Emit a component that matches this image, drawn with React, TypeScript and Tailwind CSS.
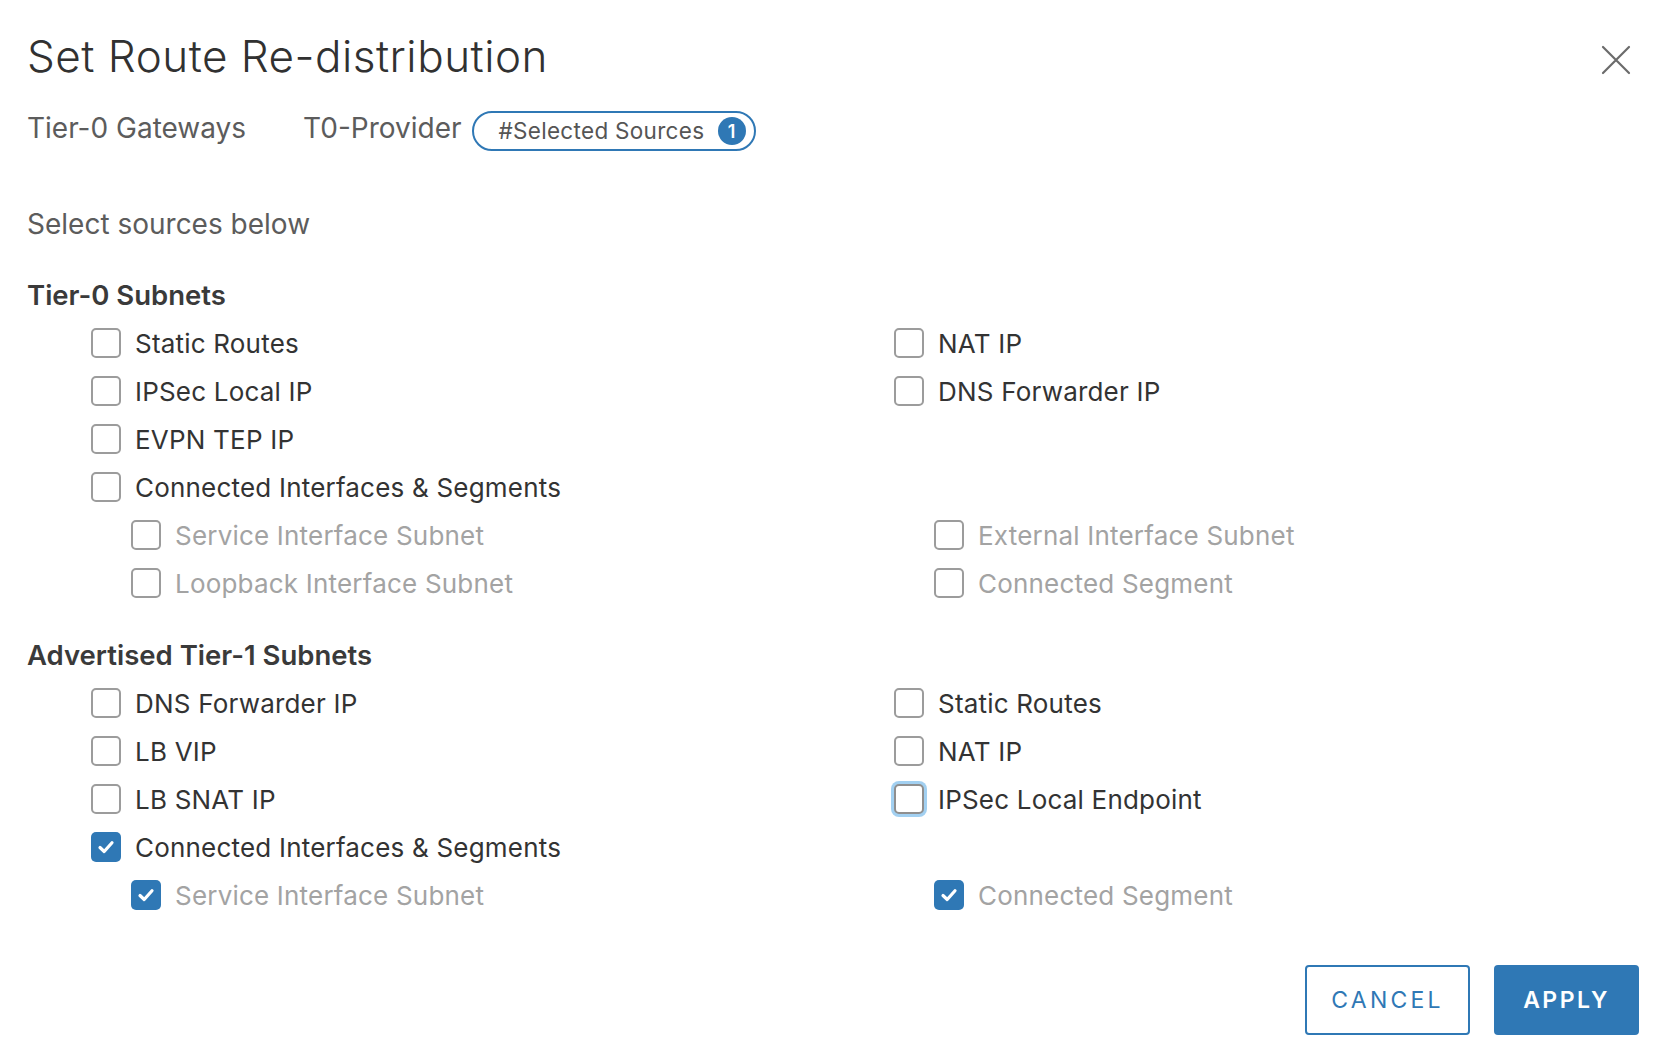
import React from "react";

function Box({ checked = false, focus = false }: { checked?: boolean; focus?: boolean }) {
  if (checked) {
    return (
      <span className="flex h-[30px] w-[30px] shrink-0 items-center justify-center rounded-[5px] bg-[#2f78b5]">
        <svg width="20" height="20" viewBox="0 0 20 20" fill="none">
          <path d="M4 10.5 L8.2 14.5 L16 5.8" stroke="#ffffff" strokeWidth="3.2" strokeLinecap="round" strokeLinejoin="round" />
        </svg>
      </span>
    );
  }
  return (
    <span
      className={
        focus
          ? "h-[30px] w-[30px] shrink-0 rounded-[5px] border-2 border-[#8f8f8f] bg-white shadow-[0_0_0_3px_rgba(86,170,230,0.55)]"
          : "h-[30px] w-[30px] shrink-0 rounded-[5px] border-2 border-[#9c9c9c] bg-white"
      }
    />
  );
}

type Item = { label: string; checked?: boolean; disabled?: boolean; focus?: boolean } | null;

function Row({ item }: { item: Item }) {
  if (!item) return <div className="h-[48px]" />;
  return (
    <div className="flex h-[48px] items-center gap-[14px]">
      <Box checked={item.checked} focus={item.focus} />
      <span
        className={
          item.disabled
            ? "text-[26px] tracking-[0.2px] text-[#a3a3a3]"
            : "text-[26px] tracking-[0.2px] text-[#333333]"
        }
      >
        {item.label}
      </span>
    </div>
  );
}

function Pairs({ rows }: { rows: [Item, Item][] }) {
  return (
    <div className="grid grid-cols-[803px_1fr]">
      {rows.map(([a, b], i) => (
        <React.Fragment key={i}>
          <Row item={a} />
          <Row item={b} />
        </React.Fragment>
      ))}
    </div>
  );
}

export default function App() {
  return (
    <div
      className="relative h-[1056px] w-[1670px] overflow-hidden bg-white pl-[27px] pt-[31px] text-[#333333]"
      style={{ fontFamily: "Inter, 'Open Sans', sans-serif" }}
    >
      <button className="absolute right-[38px] top-[44px] flex h-[32px] w-[32px] items-center justify-center">
        <svg width="30" height="30" viewBox="0 0 30 30" fill="none">
          <path d="M2 2 L28 28 M28 2 L2 28" stroke="#6b6b6b" strokeWidth="2.2" strokeLinecap="round" />
        </svg>
      </button>

      <h1 className="flex h-[50px] items-center text-[44px] font-light tracking-[0.5px] text-[#313131]">
        Set Route Re-distribution
      </h1>

      <div className="mt-[30px] flex h-[40px] items-center text-[28px] text-[#5c5c5c]">
        <span className="mb-[6px]">Tier-0 Gateways</span>
        <span className="mb-[6px] ml-[57px]">T0-Provider</span>
        <span className="ml-[10px] flex h-[40px] w-[284px] items-center rounded-full border-2 border-[#2f78b5] pl-[25px] pr-[8px]">
          <span className="text-[22.5px] tracking-[0.3px] text-[#555555]">#Selected Sources</span>
          <span className="ml-auto flex h-[28px] w-[28px] items-center justify-center rounded-full bg-[#2f78b5] text-[18px] font-semibold text-white">
            1
          </span>
        </span>
      </div>

      <div className="mt-[55px] flex h-[36px] items-center text-[28px] text-[#5c5c5c]">Select sources below</div>

      <div className="mt-[34px] flex h-[40px] items-center text-[27.5px] font-semibold text-[#3a3a3a]">Tier-0 Subnets</div>
      <div className="mt-[3px] pl-[64px]">
        <Pairs
          rows={[
            [{ label: "Static Routes" }, { label: "NAT IP" }],
            [{ label: "IPSec Local IP" }, { label: "DNS Forwarder IP" }],
            [{ label: "EVPN TEP IP" }, null],
            [{ label: "Connected Interfaces & Segments" }, null],
          ]}
        />
        <div className="pl-[40px]">
          <Pairs
            rows={[
              [{ label: "Service Interface Subnet", disabled: true }, { label: "External Interface Subnet", disabled: true }],
              [{ label: "Loopback Interface Subnet", disabled: true }, { label: "Connected Segment", disabled: true }],
            ]}
          />
        </div>
      </div>

      <div className="mt-[29px] flex h-[40px] items-center text-[27.5px] font-semibold text-[#3a3a3a]">
        Advertised Tier-1 Subnets
      </div>
      <div className="mt-[3px] pl-[64px]">
        <Pairs
          rows={[
            [{ label: "DNS Forwarder IP" }, { label: "Static Routes" }],
            [{ label: "LB VIP" }, { label: "NAT IP" }],
            [{ label: "LB SNAT IP" }, { label: "IPSec Local Endpoint", focus: true }],
            [{ label: "Connected Interfaces & Segments", checked: true }, null],
          ]}
        />
        <div className="pl-[40px]">
          <Pairs
            rows={[
              [
                { label: "Service Interface Subnet", disabled: true, checked: true },
                { label: "Connected Segment", disabled: true, checked: true },
              ],
            ]}
          />
        </div>
      </div>

      <div className="mt-[46px] flex justify-end gap-[24px] pr-[31px]">
        <button className="flex h-[70px] w-[165px] items-center justify-center rounded-[4px] border-2 border-[#2f78b5] bg-white text-[23px] tracking-[3.2px] text-[#2f78b5]">
          CANCEL
        </button>
        <button className="flex h-[70px] w-[145px] items-center justify-center rounded-[4px] bg-[#2f78b5] text-[23px] font-semibold tracking-[2.5px] text-white">
          APPLY
        </button>
      </div>
    </div>
  );
}
